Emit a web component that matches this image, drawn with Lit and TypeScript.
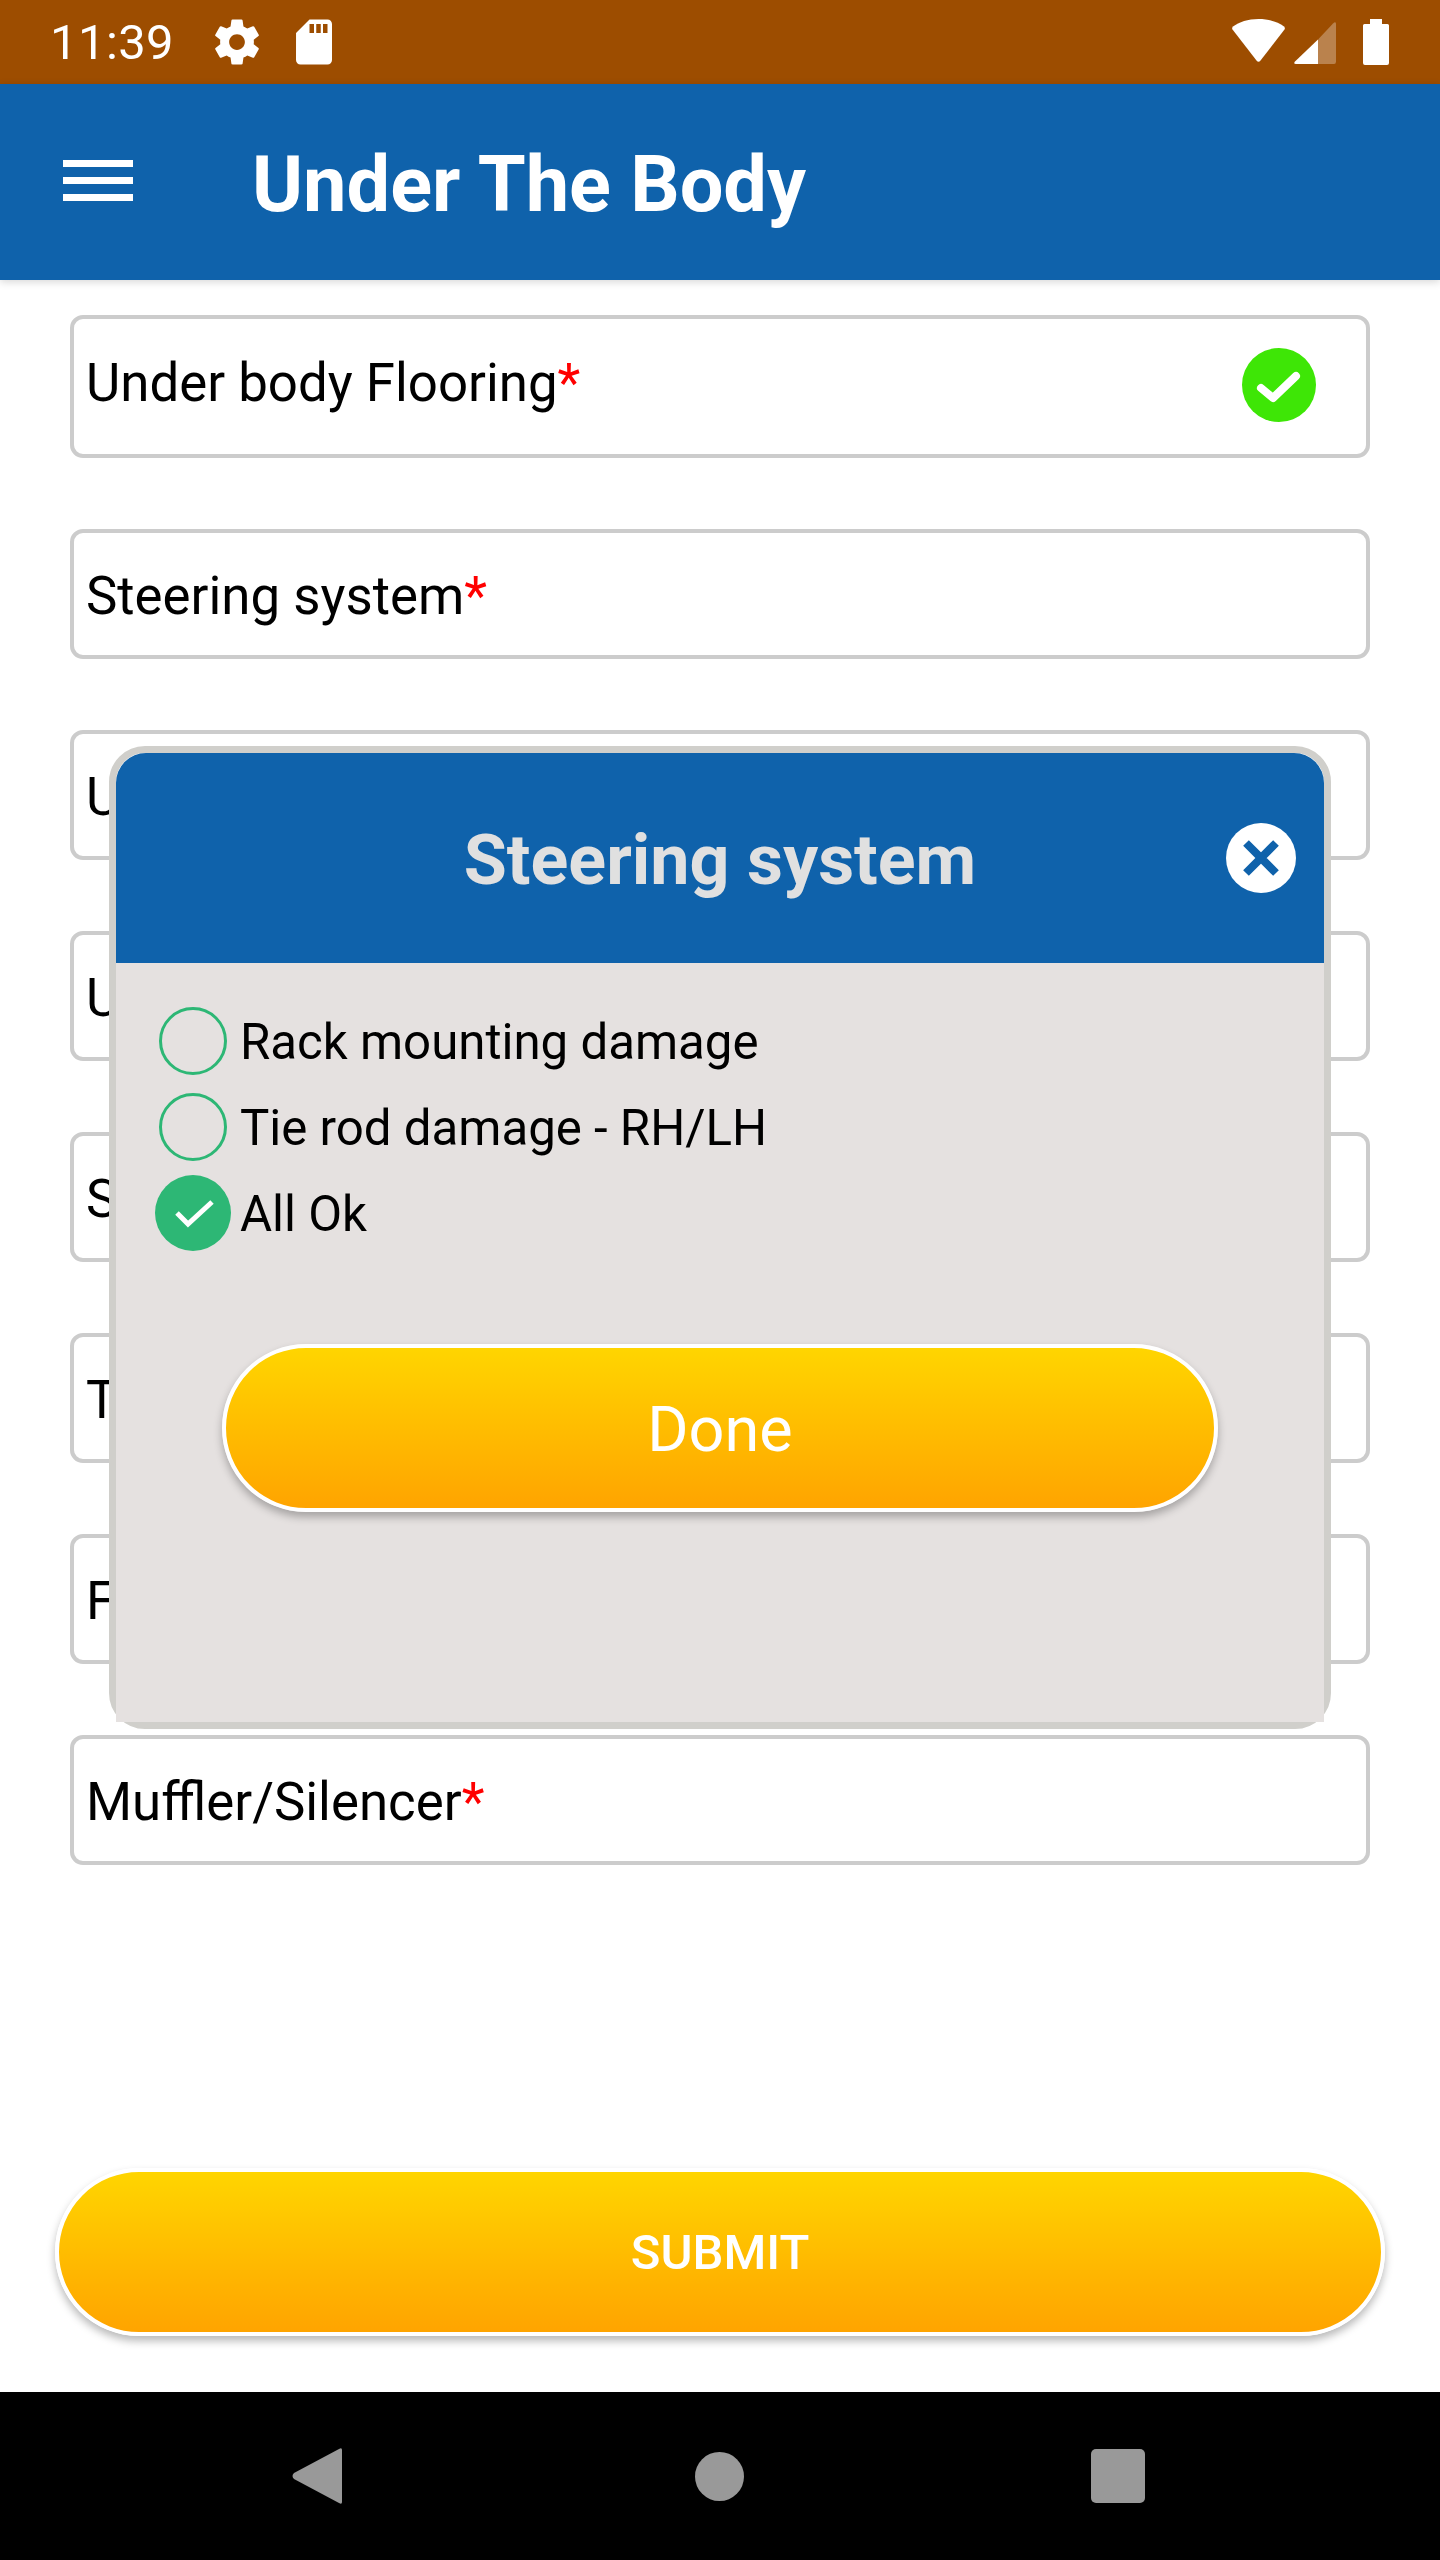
import {LitElement, html, css, svg} from "lit";
import {customElement} from "lit/decorators.js";

const gearPath =
  "M19.43 12.98c.04-.32.07-.64.07-.98s-.03-.66-.07-.98l2.11-1.65c.19-.15.24-.42.12-.64l-2-3.46c-.12-.22-.39-.3-.61-.22l-2.49 1c-.52-.4-1.08-.73-1.69-.98l-.38-2.65C14.46 2.18 14.25 2 14 2h-4c-.25 0-.46.18-.49.42l-.38 2.65c-.61.25-1.17.59-1.69.98l-2.49-1c-.23-.09-.49 0-.61.22l-2 3.46c-.13.22-.07.49.12.64l2.11 1.65c-.04.32-.07.65-.07.98s.03.66.07.98l-2.11 1.65c-.19.15-.24.42-.12.64l2 3.46c.12.22.39.3.61.22l2.49-1c.52.4 1.08.73 1.69.98l.38 2.65c.03.24.24.42.49.42h4c.25 0 .46-.18.49-.42l.38-2.65c.61-.25 1.17-.59 1.69-.98l2.49 1c.23.09.49 0 .61-.22l2-3.46c.12-.22.07-.49-.12-.64l-2.11-1.65zM12 15.5c-1.93 0-3.5-1.57-3.5-3.5s1.57-3.5 3.5-3.5 3.5 1.57 3.5 3.5-1.57 3.5-3.5 3.5z";
const sdPath =
  "M18 2h-8L4.02 8 4 20c0 1.1.9 2 2 2h12c1.1 0 2-.9 2-2V4c0-1.1-.9-2-2-2zm-6 6h-2V4h2v4zm3 0h-2V4h2v4zm3 0h-2V4h2v4z";

// fields behind the dialog: only the first letter of each shows past its edge
const hiddenFields = ["U", "U", "S", "T", "F"];

const options = [
  {label: "Rack mounting damage", checked: false},
  {label: "Tie rod damage - RH/LH", checked: false},
  {label: "All Ok", checked: true},
];

@customElement("app-root")
class AppRoot extends LitElement {
  static styles = css`
    :host {
      display: block;
      position: relative;
      width: 1440px;
      height: 2560px;
      background: #fff;
      font-family: Roboto, "Liberation Sans", sans-serif;
      color: #000;
      overflow: hidden;
    }
    .page {
      display: flex;
      flex-direction: column;
      height: 100%;
    }
    svg {
      display: block;
      flex: none;
    }
    .status {
      flex: none;
      display: flex;
      align-items: center;
      height: 84px;
      padding: 0 51px 0 50px;
      box-sizing: border-box;
      background: #9d4d00;
      color: #fff;
    }
    .time {
      width: 160px;
      padding-top: 2px;
      font-size: 49px;
      line-height: 82px;
      letter-spacing: 0.4px;
    }
    .sd {
      margin-left: 23px;
    }
    .wifi {
      margin-left: auto;
    }
    .signal {
      margin-left: 9px;
    }
    .battery {
      margin-left: 27px;
    }
    .appbar {
      flex: none;
      position: relative;
      z-index: 1;
      display: flex;
      align-items: center;
      height: 196px;
      padding-left: 63px;
      box-sizing: border-box;
      background: #0f62ab;
      box-shadow: 0 2px 8px rgba(0, 0, 0, 0.16);
      color: #fff;
    }
    .burger {
      display: flex;
      flex-direction: column;
      gap: 10px;
      width: 70px;
      margin: 0 119px 4px 0;
    }
    .burger span {
      height: 7px;
      background: #fff;
    }
    .title {
      padding-top: 6px;
      font-size: 77.5px;
      font-weight: 700;
      line-height: 1;
    }
    .content {
      flex: 1;
      display: flex;
      flex-direction: column;
      padding: 35px 70px 0;
    }
    .fields {
      display: flex;
      flex-direction: column;
      gap: 71px;
    }
    .field {
      display: flex;
      align-items: center;
      height: 130px;
      padding: 4px 0 0 12px;
      box-sizing: border-box;
      border: 4px solid #ccc;
      border-radius: 13px;
      font-size: 52.8px;
    }
    .field.done {
      height: 143px;
      justify-content: space-between;
      padding: 0 50px 0 12px;
    }
    .field.done .label {
      margin-bottom: 8px;
    }
    .field.done svg {
      margin-bottom: 3px;
    }
    .req {
      color: #f00;
    }
    .pill {
      display: flex;
      align-items: center;
      justify-content: center;
      height: 168px;
      box-sizing: border-box;
      border: 4px solid #fff;
      border-radius: 84px;
      background: linear-gradient(#ffd500, #ffa400);
      box-shadow: 0 5px 9px rgba(0, 0, 0, 0.28);
      color: #fff;
    }
    .submit {
      margin: auto -15px 56px;
      font-size: 49px;
      font-weight: 500;
    }
    .nav {
      flex: none;
      display: flex;
      align-items: center;
      height: 168px;
      padding-left: 292px;
      box-sizing: border-box;
      background: #000;
    }
    .home {
      margin-left: 353px;
    }
    .recents {
      margin-left: 347px;
    }
    .dialog {
      position: absolute;
      left: 109px;
      top: 746px;
      width: 1222px;
      height: 983px;
      box-sizing: border-box;
      display: flex;
      flex-direction: column;
      border: 7px solid #d0cfcb;
      border-radius: 36px;
      background: #fff;
    }
    .dialog-head {
      flex: none;
      position: relative;
      display: flex;
      align-items: center;
      justify-content: center;
      height: 210px;
      padding-top: 3px;
      box-sizing: border-box;
      border-radius: 30px 30px 0 0;
      background: #0f62ab;
      color: #e0e0e0;
      font-size: 70px;
      font-weight: 700;
    }
    .close {
      position: absolute;
      right: 28px;
      top: 70px;
    }
    .dialog-body {
      flex: 1;
      padding: 35px 0 0;
      background: #e5e1e0;
    }
    .option {
      display: flex;
      align-items: center;
      height: 86px;
      padding-left: 39px;
      font-size: 49.2px;
    }
    .option span {
      padding-top: 2px;
    }
    .mark {
      width: 76px;
      margin-right: 9px;
    }
    .done-btn {
      width: 996px;
      margin: 88px auto 0;
      padding-top: 2px;
      font-size: 63px;
    }
  `;

  renderMark(checked: boolean) {
    return html`<svg class="mark" width="76" height="78" viewBox="0 0 76 78">
      ${checked
        ? svg`<circle cx="38" cy="39" r="38" fill="#2db775"></circle>
            <path d="M22 39 L33 50 L57 28" fill="none" stroke="#fff" stroke-width="5"></path>`
        : svg`<circle cx="38" cy="39" r="32.5" fill="none" stroke="#2db775" stroke-width="3"></circle>`}
    </svg>`;
  }

  render() {
    return html`
      <div class="page">
        <div class="status">
          <span class="time">11:39</span>
          <svg width="54" height="54" viewBox="0 0 24 24" fill="#fff"><path d=${gearPath}></path></svg>
          <svg class="sd" width="54" height="54" viewBox="0 0 24 24" fill="#fff"><path d=${sdPath}></path></svg>
          <svg class="wifi" width="53" height="46" viewBox="0 0 53 46" fill="#fff">
            <path d="M26.5 0C37 0 46 3 52 7.5Q53.5 9 52.5 10.5L28.5 41.5Q26.5 44 24.5 41.5L.5 10.5Q-.5 9 1 7.5C7 3 16 0 26.5 0Z"></path>
          </svg>
          <svg class="signal" width="42" height="46" viewBox="0 0 42 46" fill="#fff">
            <path d="M24 20.5L39 4.5Q42 2 42 5V42.5Q42 45 40 45H24Z" opacity="0.3"></path>
            <path d="M24 20.5V45H2Q-1 45 1 42.5Z"></path>
          </svg>
          <svg class="battery" width="26" height="46" viewBox="0 0 26 46" fill="#fff">
            <path d="M7 0H19V5H24.5Q26 5 26 6.5V44Q26 46 24 46H2Q0 46 0 44V6.5Q0 5 1.5 5H7Z"></path>
          </svg>
        </div>

        <header class="appbar">
          <div class="burger"><span></span><span></span><span></span></div>
          <div class="title">Under The Body</div>
        </header>

        <main class="content">
          <div class="fields">
            <div class="field done">
              <span class="label">Under body Flooring<span class="req">*</span></span>
              <svg width="74" height="74" viewBox="0 0 74 74">
                <circle cx="37" cy="37" r="37" fill="#3ee606"></circle>
                <path d="M19 40L31 50L54 28" fill="none" stroke="#fff" stroke-width="8" stroke-linecap="round" stroke-linejoin="round"></path>
              </svg>
            </div>
            <div class="field"><span>Steering system<span class="req">*</span></span></div>
            ${hiddenFields.map((f) => html`<div class="field"><span>${f}</span></div>`)}
            <div class="field"><span>Muffler/Silencer<span class="req">*</span></span></div>
          </div>
          <div class="pill submit">SUBMIT</div>
        </main>

        <nav class="nav">
          <svg width="50" height="56" viewBox="0 0 50 56" fill="#999">
            <path d="M50 2V54Q50 57 47 55L2 31Q-1 28 2 25L47 1Q50 -1 50 2Z"></path>
          </svg>
          <svg class="home" width="49" height="49" viewBox="0 0 49 49" fill="#999"><circle cx="24.5" cy="24.5" r="24.5"></circle></svg>
          <svg class="recents" width="54" height="54" viewBox="0 0 54 54" fill="#999"><rect width="54" height="54" rx="5"></rect></svg>
        </nav>
      </div>

      <section class="dialog">
        <div class="dialog-head">
          Steering system
          <svg class="close" width="70" height="70" viewBox="0 0 70 70">
            <circle cx="35" cy="35" r="35" fill="#fff"></circle>
            <path d="M20 20L50 50M50 20L20 50" stroke="#0f62ab" stroke-width="8"></path>
          </svg>
        </div>
        <div class="dialog-body">
          ${options.map(
            (o) => html`<div class="option">${this.renderMark(o.checked)}<span>${o.label}</span></div>`,
          )}
          <div class="pill done-btn">Done</div>
        </div>
      </section>
    `;
  }
}
